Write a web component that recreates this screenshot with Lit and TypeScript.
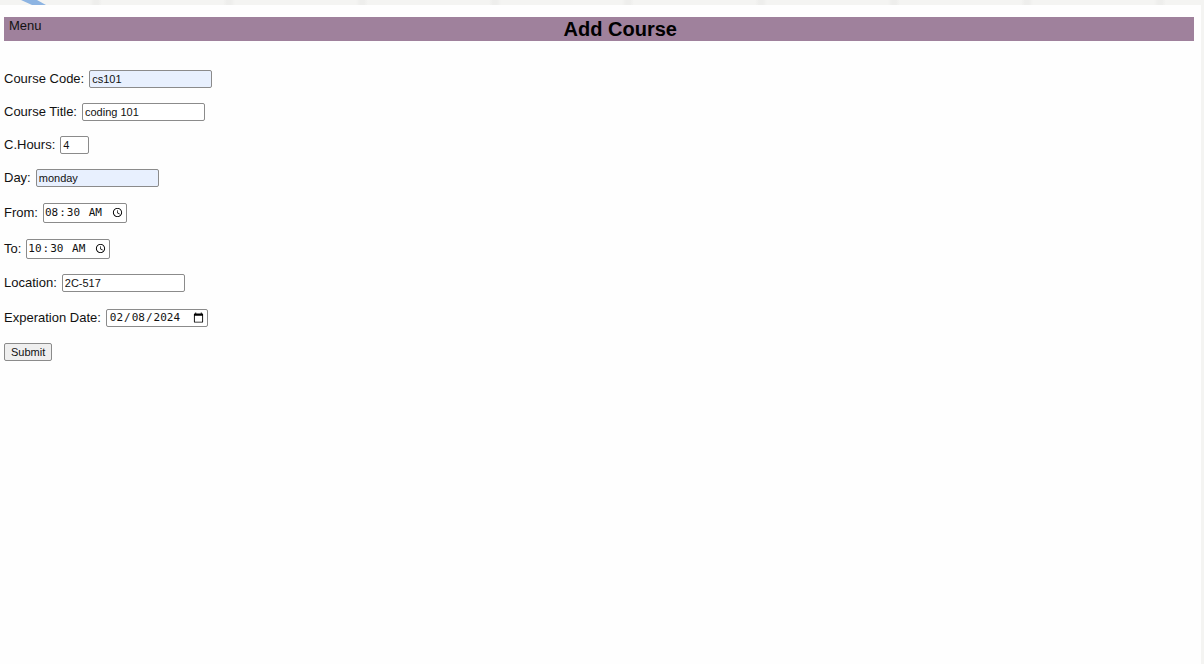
import { LitElement, html, css } from "lit";
import { customElement } from "lit/decorators.js";
import { classMap } from "lit/directives/class-map.js";

interface Field {
  id: string;
  label: string;
  type: "text" | "number" | "time" | "date";
  value: string;
  filled?: boolean;
}

const FIELDS: Field[] = [
  { id: "code", label: "Course Code:", type: "text", value: "cs101", filled: true },
  { id: "title", label: "Course Title:", type: "text", value: "coding 101" },
  { id: "hours", label: "C.Hours:", type: "number", value: "4" },
  { id: "day", label: "Day:", type: "text", value: "monday", filled: true },
  { id: "from", label: "From:", type: "time", value: "08:30" },
  { id: "to", label: "To:", type: "time", value: "10:30" },
  { id: "location", label: "Location:", type: "text", value: "2C-517" },
  { id: "expires", label: "Experation Date:", type: "date", value: "2024-02-08" },
];

@customElement("course-form")
class CourseForm extends LitElement {
  static styles = css`
    :host {
      display: block;
    }
    .form {
      display: flex;
      flex-direction: column;
      align-items: flex-start;
      gap: 15px;
    }
    .row {
      display: flex;
      align-items: center;
      gap: 5px;
      height: 18px;
    }
    .row.picker {
      height: 21px;
    }
    .label {
      font-size: 13px;
      line-height: 16px;
      white-space: nowrap;
    }
    .input {
      box-sizing: border-box;
      height: 18px;
      margin: 0;
      padding: 0 2px;
      border: 1px solid #8b8b8b;
      border-radius: 2px;
      background: #fff;
      color: #111;
      font: 11px/14px "Liberation Sans", Arial, sans-serif;
    }
    .text {
      width: 123px;
    }
    .number {
      width: 29px;
      appearance: textfield;
    }
    .number::-webkit-inner-spin-button {
      appearance: none;
      margin: 0;
    }
    .filled {
      background: #e8f0fe;
    }
    .time,
    .date {
      font-family: "DejaVu Sans Mono", monospace;
    }
    .time {
      width: 84px;
      height: 20px;
      padding: 0 3px 0 0;
    }
    .date {
      width: 102px;
      padding: 0 3px 0 2px;
    }
    .input::-webkit-calendar-picker-indicator {
      width: 11px;
      height: 11px;
      padding: 0;
      margin: 0;
      background-size: 11px 11px;
    }
    .submit {
      box-sizing: border-box;
      height: 18px;
      margin: 0;
      padding: 0 6px;
      border: 1px solid #8b8b8b;
      border-radius: 2px;
      background: #efefef;
      color: #111;
      font: 11px/14px "Liberation Sans", Arial, sans-serif;
    }
  `;

  render() {
    return html`
      <form class="form" @submit=${(e: Event) => e.preventDefault()}>
        ${FIELDS.map(
          (f) => html`
            <div class=${classMap({ row: true, picker: f.type === "time" || f.type === "date" })}>
              <label class="label" for=${f.id}>${f.label}</label>
              <input
                class=${classMap({ input: true, [f.type]: true, filled: !!f.filled })}
                id=${f.id}
                name=${f.id}
                type=${f.type}
                .value=${f.value}
              />
            </div>
          `,
        )}
        <button class="submit" type="submit">Submit</button>
      </form>
    `;
  }
}

@customElement("app-root")
class AppRoot extends LitElement {
  static styles = css`
    :host {
      display: flex;
      flex-direction: column;
      position: relative;
      box-sizing: border-box;
      min-height: 100vh;
      padding: 5px 3px 0 0;
      overflow: hidden;
      background: repeating-linear-gradient(90deg, #f4f4f2 0 90px, #eeeeec 94px 98px, #f4f4f2 102px 133px);
      color: #111;
      font-family: "Liberation Sans", Arial, sans-serif;
    }
    .accent {
      position: absolute;
      top: 0;
      left: 20px;
      width: 26px;
      height: 5px;
    }
    .page {
      flex: 1;
      padding: 12px 7px 16px 4px;
      background: #fefefe;
    }
    .bar {
      display: flex;
      align-items: flex-start;
      height: 24px;
      margin-bottom: 29px;
      background: #9f819c;
    }
    .menu {
      margin: 0;
      padding: 1px 5px;
      border: 0;
      background: none;
      color: #111;
      font: 13px/16px "Liberation Sans", Arial, sans-serif;
    }
    .heading {
      flex: 1;
      margin: 0;
      color: #000;
      font-size: 20px;
      line-height: 24px;
      text-align: center;
    }
  `;

  render() {
    return html`
      <svg class="accent" viewBox="0 0 26 5" aria-hidden="true">
        <path d="M1 0H17L26 5H12Z" fill="#8db4e2" />
      </svg>
      <main class="page">
        <header class="bar">
          <button class="menu" type="button">Menu</button>
          <h1 class="heading">Add Course</h1>
        </header>
        <course-form></course-form>
      </main>
    `;
  }
}
